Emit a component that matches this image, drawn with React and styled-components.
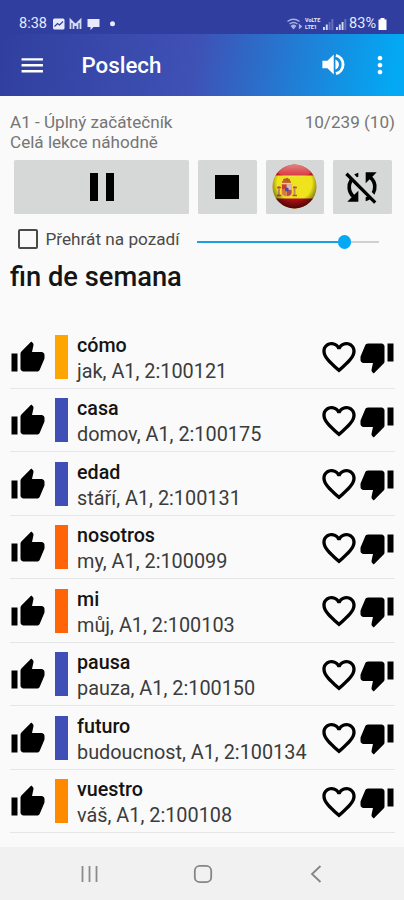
import React from 'react';
import styled, { createGlobalStyle } from 'styled-components';
import {
  MdMenu, MdMoreVert, MdPause, MdStop, MdSyncDisabled,
  MdThumbUp, MdThumbDown, MdFavoriteBorder,
} from 'react-icons/md';

const GlobalStyle = createGlobalStyle`
  * { box-sizing: border-box; }
  body {
    margin: 0;
    background: #fafafa;
    font-family: Roboto, 'Liberation Sans', sans-serif;
  }
  svg { display: block; flex: none; }
`;

const Screen = styled.div`
  display: flex;
  flex-direction: column;
  width: 404px;
  height: 900px;
  overflow: hidden;
  background: #fafafa;
`;

const StatusBar = styled.div`
  display: flex;
  justify-content: space-between;
  height: 33.5px;
  padding: 14px 17px 0 19px;
  background: #303f9f;
  color: #e8eafb;
`;

const StatusGroup = styled.div`
  display: flex;
  align-items: center;
  height: 19px;
  gap: ${props => props.$gap || 0}px;
`;

const StatusText = styled.span`
  font-size: 14.5px;
  line-height: 19px;
`;

const AppBar = styled.header`
  display: flex;
  align-items: center;
  height: 62.5px;
  padding: 0 10px 0 18px;
  background: linear-gradient(100deg, #303f9f 0%, #3f51b5 48%, #03a9f4 97%);
  color: #fff;
`;

const Title = styled.h1`
  flex: 1;
  margin: 1px 0 0 35px;
  font-size: 22.3px;
  font-weight: 500;
`;

const MoreButton = styled.div`
  margin-left: 18.5px;
`;

const Content = styled.main`
  flex: 1;
  padding: 16px 9px 0 10px;
`;

const Info = styled.div`
  display: flex;
  justify-content: space-between;
  height: 48px;
  font-size: 17.1px;
  line-height: 20px;
  color: #757575;
`;

const Controls = styled.div`
  display: grid;
  grid-template-columns: 175px 58.5px 58.5px 58.5px;
  column-gap: 9px;
  height: 53.5px;
  margin-left: 4px;
`;

const ControlButton = styled.div`
  display: flex;
  align-items: center;
  justify-content: center;
  border-radius: 1.5px;
  background: #d6d8d7;
  color: #000;
`;

const Options = styled.div`
  display: flex;
  align-items: center;
  height: 50px;
  padding: 0 16px 0 7.5px;
`;

const CheckBox = styled.div`
  width: 20px;
  height: 20px;
  border: 2px solid #4a4a4a;
  border-radius: 2px;
`;

const OptionLabel = styled.span`
  width: 151.5px;
  margin: 1px 0 0 8px;
  font-size: 17.2px;
  color: #4a4a4a;
  white-space: nowrap;
`;

const Slider = styled.div`
  display: flex;
  align-items: center;
  flex: 1;
  margin-top: 7px;
`;

const Filled = styled.div`
  width: 140.5px;
  height: 2.5px;
  background: #1e9fe0;
`;

const Thumb = styled.div`
  width: 13.5px;
  height: 13.5px;
  border-radius: 50%;
  background: #03a9f4;
`;

const Track = styled.div`
  flex: 1;
  height: 2px;
  background: #d0d0d0;
`;

const Heading = styled.h2`
  height: 61.5px;
  margin: 0;
  font-size: 27.3px;
  font-weight: 500;
  line-height: 27px;
  color: #141414;
`;

const Row = styled.div`
  display: flex;
  align-items: center;
  height: 63.5px;
  border-bottom: 1.5px solid #e6e6e6;
  color: #000;
`;

const RowIcon = styled.div`
  padding-top: ${props => props.$drop || 0}px;
`;

const Marker = styled.div`
  width: 13.5px;
  height: 44px;
  margin: 1px 0 0 8.5px;
  background: ${props => props.$color};
`;

const Words = styled.div`
  flex: 1;
  margin: 5px 0 0 9px;
  white-space: nowrap;
`;

const Word = styled.div`
  font-size: 19.7px;
  font-weight: 500;
  line-height: 26px;
  color: #141414;
`;

const Detail = styled.div`
  font-size: 19.85px;
  line-height: 26px;
  color: #3c3c3c;
`;

const RowActions = styled.div`
  display: flex;
  align-items: center;
`;

const NavBar = styled.nav`
  display: flex;
  align-items: center;
  justify-content: space-between;
  height: 53px;
  padding: 0 81px 0 80px;
  background: #f1f1f1;
`;

const HomeButton = styled.div`
  margin-right: 4px;
`;

const items = [
  { word: 'cómo', detail: 'jak, A1, 2:100121', color: '#ffa500' },
  { word: 'casa', detail: 'domov, A1, 2:100175', color: '#3f4fb5' },
  { word: 'edad', detail: 'stáří, A1, 2:100131', color: '#3f4fb5' },
  { word: 'nosotros', detail: 'my, A1, 2:100099', color: '#ff6408' },
  { word: 'mi', detail: 'můj, A1, 2:100103', color: '#ff6408' },
  { word: 'pausa', detail: 'pauza, A1, 2:100150', color: '#3f4fb5' },
  { word: 'futuro', detail: 'budoucnost, A1, 2:100134', color: '#3f4fb5' },
  { word: 'vuestro', detail: 'váš, A1, 2:100108', color: '#ff8a00' },
];

// picture, mail and chat notifications
const Notifications = () => (
  <svg width="64" height="14" viewBox="0 0 64 14" fill="#e8eafb">
    <rect x="1" y="1.5" width="11.5" height="11" rx="1.5" />
    <path d="M2.5 9.5l3-3 2 1.5 3.5-3.5" fill="none" stroke="#303f9f" strokeWidth="1.2" />
    <path d="M18.5 12V3l5 5 5-5v9M21.5 12V6M25.5 12V6" fill="none" stroke="#d3d8f3" strokeWidth="1.8" />
    <path d="M35.5 2h12v8h-6l-3 3v-3h-3z" />
    <circle cx="60.5" cy="6.8" r="2.5" />
  </svg>
);

const WifiIcon = () => (
  <svg width="16" height="14" viewBox="0 0 16 14" fill="none" stroke="#a9b1e0" strokeWidth="1.3">
    <path d="M.5 4.5q6-4.5 12 0M2.5 7q4-3 8 0" />
    <path d="M4.5 9l2 2.5 2-2.5q-2-1.5-4 0z" fill="#a9b1e0" />
    <path d="M12.5 8l1.8 1.5-1.8 1.5z" fill="#d8dcf5" />
  </svg>
);

const Lte = styled.span`
  display: flex;
  flex-direction: column;
  width: 16px;
  font-size: 5.4px;
  font-weight: 700;
  line-height: 6.5px;
  white-space: nowrap;
`;

const SignalIcon = ({ level }) => (
  <svg width="11" height="12" viewBox="0 0 11 12">
    {[3, 5.5, 8, 11].map((h, i) => (
      <rect key={h} x={i * 2.8} y={12 - h} width="1.9" height={h} fill={i < level ? '#d8dcf5' : '#6672bd'} />
    ))}
  </svg>
);

const BatteryIcon = () => (
  <svg width="9" height="12" viewBox="0 0 9 12" fill="#fff">
    <path d="M2.5 0h4v1.5H8.5V12H.5V1.5h2z" />
  </svg>
);

const SpeakerIcon = () => (
  <svg width="29" height="29" viewBox="0 0 24 24" fill="#fff">
    <path d="M2.8 8.8v6.4H7l5.200 5V3.800L7 8.800z" />
    <path d="M13.600 7.800v8.400c1.800-.8 2.900-2.400 2.900-4.200s-1.100-3.400-2.900-4.200z" />
    <path d="M14 4.400c3.400.9 5.900 4 5.900 7.600s-2.500 6.700-5.900 7.600" fill="none" stroke="#fff" strokeWidth="2.400" />
  </svg>
);

const SpainFlag = () => (
  <svg width="45" height="45" viewBox="0 0 45 45">
    <defs>
      <clipPath id="ball"><circle cx="22.5" cy="22.5" r="22" /></clipPath>
      <radialGradient id="shade" cx="50%" cy="42%" r="55%">
        <stop offset="0.7" stopColor="#000" stopOpacity="0" />
        <stop offset="1" stopColor="#000" stopOpacity="0.5" />
      </radialGradient>
      <linearGradient id="gloss" x1="0" y1="0" x2="0" y2="1">
        <stop offset="0" stopColor="#fff" stopOpacity="0.45" />
        <stop offset="1" stopColor="#fff" stopOpacity="0.1" />
      </linearGradient>
    </defs>
    <g clipPath="url(#ball)">
      <rect width="45" height="45" fill="#eee31c" />
      <rect width="45" height="11.5" fill="#cf1820" />
      <rect y="34.5" width="45" height="11" fill="#a80f12" />
      <g>
        <path d="M10 17h9v2h-9z" fill="#c2702a" />
        <path d="M14 14h2v4h-2zM11 15.5q3.5-3 7 0v2h-7z" fill="#b95b2a" />
        <rect x="6" y="22" width="2" height="10" fill="#c68d62" />
        <rect x="21.5" y="22" width="2" height="10" fill="#c68d62" />
        <path d="M5 23.5h4M21 23.5h4M5 31.5h4.5M20.5 31.5H25" stroke="#b8503b" strokeWidth="1.5" />
        <path d="M9.5 20h10.5v8.5q0 4-5.250 4t-5.250-4z" fill="#d9a57c" />
        <path d="M10 20.5h4.5v5H10z" fill="#ce3a2c" />
        <path d="M15 20.5h4.5v5H15z" fill="#dfb4bf" />
        <path d="M10 26h4.5v6q-4-.5-4.5-3z" fill="#dc7a35" />
        <path d="M15 26h4.5v3q-.5 2.5-4.5 3z" fill="#b74958" />
        <circle cx="14.8" cy="25.5" r="1.9" fill="#3e53a5" />
      </g>
      <ellipse cx="22.5" cy="7" rx="17" ry="6.5" fill="url(#gloss)" />
      <rect width="45" height="45" fill="url(#shade)" />
    </g>
  </svg>
);

const RecentsIcon = () => (
  <svg width="19" height="18" viewBox="0 0 19 18" stroke="#8b8b8b" strokeWidth="1.8">
    <path d="M2.5 1v16M9.5 1v16M16.5 1v16" />
  </svg>
);

const HomeIcon = () => (
  <svg width="20" height="20" viewBox="0 0 20 20" fill="none" stroke="#858585" strokeWidth="1.8">
    <rect x="1.8" y="1.8" width="16.4" height="16.4" rx="5" />
  </svg>
);

const BackIcon = () => (
  <svg width="13" height="18" viewBox="0 0 13 18" fill="none" stroke="#858585" strokeWidth="1.8">
    <path d="M10.5 1L2 9l8.5 8" />
  </svg>
);

const WordRow = ({ word, detail, color }) => (
  <Row>
    <RowIcon $drop={3}><MdThumbUp size={36} /></RowIcon>
    <Marker $color={color} />
    <Words>
      <Word>{word}</Word>
      <Detail>{detail}</Detail>
    </Words>
    <RowActions>
      <RowIcon $drop={2}><MdFavoriteBorder size={40} /></RowIcon>
      <RowIcon $drop={2}><MdThumbDown size={36} /></RowIcon>
    </RowActions>
  </Row>
);

const App = () => (
  <Screen>
    <GlobalStyle />
    <StatusBar>
      <StatusGroup $gap={5}>
        <StatusText>8:38</StatusText>
        <Notifications />
      </StatusGroup>
      <StatusGroup $gap={2}>
        <WifiIcon />
        <Lte>
          <span>VoLTE</span>
          <span>LTE1</span>
        </Lte>
        <SignalIcon level={2} />
        <SignalIcon level={3} />
        <StatusText>83%</StatusText>
        <BatteryIcon />
      </StatusGroup>
    </StatusBar>
    <AppBar>
      <MdMenu size={28.5} />
      <Title>Poslech</Title>
      <SpeakerIcon />
      <MoreButton>
        <MdMoreVert size={28} />
      </MoreButton>
    </AppBar>
    <Content>
      <Info>
        <div>
          A1 - Úplný začátečník<br />
          Celá lekce náhodně
        </div>
        <div>10/239 (10)</div>
      </Info>
      <Controls>
        <ControlButton><MdPause size={48} /></ControlButton>
        <ControlButton><MdStop size={48} /></ControlButton>
        <ControlButton><SpainFlag /></ControlButton>
        <ControlButton><MdSyncDisabled size={44} /></ControlButton>
      </Controls>
      <Options>
        <CheckBox />
        <OptionLabel>Přehrát na pozadí</OptionLabel>
        <Slider>
          <Filled />
          <Thumb />
          <Track />
        </Slider>
      </Options>
      <Heading>fin de semana</Heading>
      {items.map(item => <WordRow key={item.word} {...item} />)}
    </Content>
    <NavBar>
      <RecentsIcon />
      <HomeButton><HomeIcon /></HomeButton>
      <BackIcon />
    </NavBar>
  </Screen>
);

export default App;
